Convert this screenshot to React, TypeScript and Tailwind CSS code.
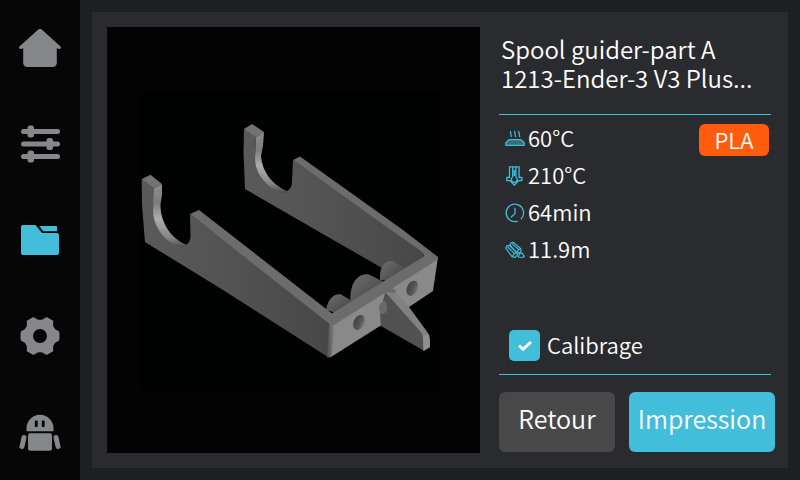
import React, { useState } from 'react';
import clsx from 'clsx';

type IconProps = { className?: string };

const HomeIcon = ({ className }: IconProps) => (
  <svg viewBox="0 0 42 38" className={className} fill="currentColor" aria-hidden="true">
    <path d="M19 .8a3 3 0 0 1 4 0L41.300 17.200c1.400 1.300.2 3.300-1.600 2.700L37.800 19v15a4.500 4.500 0 0 1-4.500 4H8.700a4.500 4.500 0 0 1-4.500-4V19l-1.900.9c-1.800.6-3-1.400-1.600-2.700Z" />
  </svg>
);

const SlidersIcon = ({ className }: IconProps) => (
  <svg viewBox="0 0 40 38" className={className} fill="currentColor" aria-hidden="true">
    <rect x="1" y="4" width="39" height="5" rx="2.500" />
    <rect x="1" y="16.500" width="39" height="5" rx="2.500" />
    <rect x="1" y="29" width="39" height="5" rx="2.500" />
    <rect x="7.500" y="0.500" width="6.500" height="12" rx="2.500" />
    <rect x="26.500" y="13" width="6.500" height="12" rx="2.500" />
    <rect x="7.500" y="25.500" width="6.500" height="12" rx="2.500" />
  </svg>
);

const FolderIcon = ({ className }: IconProps) => (
  <svg viewBox="0 0 38 30" className={className} fill="currentColor" aria-hidden="true">
    <path d="M2 0h12.500L21 8h15a2 2 0 0 1 2 2v18a2 2 0 0 1-2 2H2a2 2 0 0 1-2-2V2a2 2 0 0 1 2-2Z" />
    <path d="M18.300 1H35a1 1 0 0 1 1 1v4.200H22.200Z" />
  </svg>
);

const GearIcon = ({ className }: IconProps) => (
  <svg viewBox="0 0 40 38" className={className} fill="currentColor" aria-hidden="true">
    <path
      fillRule="evenodd"
      d="M12.500.5c.9-.5 1.900-.2 2.600.4 1.500 1.300 3 1.900 4.900 1.900s3.400-.6 4.900-1.900c.7-.6 1.700-.9 2.600-.4l4.900 2.800c.8.5 1.100 1.300.9 2.200-.4 2-.2 3.600.7 5.100.9 1.600 2.200 2.600 4 3.200.8.3 1.200.9 1.300 1.700.3 2.400.3 4.600 0 7-.1.800-.5 1.400-1.300 1.700-1.800.6-3.100 1.600-4 3.200-.9 1.500-1.100 3.100-.7 5.100.2.900-.1 1.700-.9 2.200l-4.900 2.800c-.9.5-1.900.2-2.600-.4-1.500-1.300-3-1.900-4.900-1.900s-3.400.6-4.900 1.900c-.7.6-1.700.9-2.600.4l-4.900-2.800c-.8-.5-1.100-1.300-.9-2.200.4-2 .2-3.600-.7-5.100-.9-1.600-2.200-2.600-4-3.200-.8-.3-1.200-.9-1.300-1.700a27 27 0 0 1 0-7c.1-.8.5-1.400 1.300-1.700 1.800-.6 3.100-1.600 4-3.200.9-1.500 1.100-3.100.7-5.100-.2-.9.1-1.700.9-2.200ZM20 12a7 7 0 1 0 0 14 7 7 0 0 0 0-14Z"
    />
  </svg>
);

const RobotIcon = ({ className }: IconProps) => (
  <svg viewBox="0 0 42 37" className={className} fill="currentColor" aria-hidden="true">
    <path
      fillRule="evenodd"
      d="M7.500 17.200v-3a13.500 13.500 0 0 1 27 0v3ZM16.800 6.500a1 1 0 0 0-1 1v4.600a1 1 0 0 0 1 1h.9a1 1 0 0 0 1-1V7.500a1 1 0 0 0-1-1Zm7 0a1 1 0 0 0-1 1v4.600a1 1 0 0 0 1 1h.9a1 1 0 0 0 1-1V7.500a1 1 0 0 0-1-1Z"
    />
    <rect x="9" y="19.200" width="24" height="17.500" rx="2" />
    <path d="M5 23.500 3 32.500M37 23.500l2 9" stroke="currentColor" strokeWidth="5" strokeLinecap="round" />
  </svg>
);

const BedIcon = ({ className }: IconProps) => (
  <svg viewBox="0 0 20 20" className={className} fill="none" stroke="currentColor" strokeWidth="1.200" aria-hidden="true">
    <path d="M4 10.700h12l3.200 3V16.400H.8v-2.700Z" fill="currentColor" fillOpacity=".45" strokeLinejoin="round" />
    <path d="M5.700 2c-1.400 1.200 1 2.300.2 3.600-.3.800.2 1.500.7 2.400M9.900 2c-1.400 1.200 1 2.300.2 3.600-.3.800.2 1.500.7 2.400M14.100 2c-1.400 1.200 1 2.300.2 3.600-.3.800.2 1.500.7 2.400" />
  </svg>
);

const NozzleIcon = ({ className }: IconProps) => (
  <svg viewBox="0 0 20 20" className={className} fill="none" stroke="currentColor" strokeWidth="1.300" aria-hidden="true">
    <path d="M4.500.8h9.600v10.700h2.700v3.200h-3.400L9.300 19.200l-4-4.500H1.800v-3.200h2.700Z" />
    <path d="M7.700 11V1M10.900 11V1M7.700 11a2.900 2.900 0 1 0 3.200 0M9.300 4v6" />
  </svg>
);

const ClockIcon = ({ className }: IconProps) => (
  <svg viewBox="0 0 20 20" className={className} fill="none" stroke="currentColor" strokeWidth="1.300" aria-hidden="true">
    <path d="M12.300 18.300a8.700 8.700 0 1 1 4-2.500" strokeLinecap="round" />
    <path d="M10 4.800v5.700L6 14.200" />
  </svg>
);

const FilamentIcon = ({ className }: IconProps) => (
  <svg viewBox="0 0 20 20" className={className} fill="none" stroke="currentColor" strokeWidth="1.200" strokeLinejoin="round" aria-hidden="true">
    <path d="M5 4.800 5.700 3 8 2.200l7.800 6.500.3 2.800-2.400 1.600-2.500-.8Z" />
    <path d="m6.800 3.600 7 6M13.800 9.600l-2.600 2.700M13.800 9.600l2-.9" />
    <path d="M.8 8.200 1.500 6.200l2.800-.8 7.600 7.200.4 2.900-2.500 1.900-2.800-.7Z" />
    <path d="m2.800 7 6.700 6.700M9.500 13.700l-2.500 3M9.500 13.700l2.400-1.100" />
    <path d="m13.300 17 1.200-3.300 2.600-.6 2.300 3.200-1.300 1Z" />
  </svg>
);

// Rendered thumbnail of the sliced model
const ModelPreview = () => (
  <svg viewBox="107 27 373 426" className="h-full w-full" role="img" aria-label="Spool guider-part A">
    <defs>
      <linearGradient id="armFace" x1="0" y1="0" x2="1" y2="0">
        <stop offset="0" stopColor="#5a5a5a" />
        <stop offset=".45" stopColor="#535353" />
        <stop offset="1" stopColor="#474747" />
      </linearGradient>
      <linearGradient id="hook" x1="0" y1="0" x2="0" y2="1">
        <stop offset="0" stopColor="#8c8c8c" />
        <stop offset=".3" stopColor="#7e7e7e" />
        <stop offset=".55" stopColor="#adadad" />
        <stop offset=".85" stopColor="#858585" />
        <stop offset="1" stopColor="#4c4c4c" />
      </linearGradient>
      <linearGradient id="cylinder" x1="0" y1="0" x2="1" y2="1">
        <stop offset="0" stopColor="#6c6c6c" />
        <stop offset=".35" stopColor="#5e5e5e" />
        <stop offset="1" stopColor="#3c3c3c" />
      </linearGradient>
      <linearGradient id="corner" x1="0" y1="0" x2="1" y2="0">
        <stop offset="0" stopColor="#4e4e4e" />
        <stop offset=".5" stopColor="#6b6b6b" />
        <stop offset="1" stopColor="#8b8b8b" />
      </linearGradient>
      <linearGradient id="hole" x1="0" y1="0" x2="1" y2="0">
        <stop offset="0" stopColor="#424242" />
        <stop offset=".6" stopColor="#555" />
        <stop offset="1" stopColor="#777" />
      </linearGradient>
    </defs>
    <rect x="107" y="27" width="373" height="426" fill="#030303" />
    <rect x="140" y="91" width="300" height="300" fill="#000101" />

    {/* far arm */}
    <path d="M244 129 256 136 255 157C257 172 267 185 277 190 286 194 292 190 292 182L293 160 391 229 422 250 424 256 423 261 404 271 382 268 316 230 245 189 243.500 152Z" fill="url(#armFace)" />
    <path d="M244 129 252 124 264 132 256 137Z" fill="#737373" />
    <path d="M256 137 264 132 263 146 261 156C262 171 272 185 288 191.500 283 195 273 191 267 184 258 175 255 167 255 157Z" fill="url(#hook)" />
    <path d="M293 160 300 156.500 403 230 438 257 425 266 423 258Q426 255 421 251L391 230Z" fill="#6c6c6c" />

    {/* cylinders behind the plate */}
    <path d="M380 280C379 265 386 260 393 261L407 270 400 282Z" fill="url(#cylinder)" />
    <path d="M350.500 303C349 283 358 273 369 274.500L386 283 372 300Z" fill="url(#cylinder)" />
    <path d="M326 310C328 298 335 293 341 294.500L354 302 340 314Z" fill="url(#cylinder)" />

    {/* near arm */}
    <path d="M141.700 179 154 187 154 202 153 210C155 225 165 239 175 244 184 249 191 244 190.500 235L190 214 331 323 328 357 223 290 145 242 142 205Z" fill="url(#armFace)" />
    <path d="M141.700 179 150.500 174.700 162 184 154 188Z" fill="#737373" />
    <path d="M154 188 162 184 162 195 160.500 204C160 222 171 239 187 245 182 250 173 246 167 240 157 230 153 220 153 210Z" fill="url(#hook)" />
    <path d="M190 214 199 210 332 313.500 336 325 331 325Z" fill="#6c6c6c" />

    {/* front plate */}
    <path d="M332 324 438 257 433 291 409 307 380 326 331 357Z" fill="#898989" />
    <path d="M331 314 423 257 438 257 437 260 334 325 329 324Z" fill="#6c6c6c" />
    <path d="M329 324 335 325 331.500 357 327 357.500Z" fill="url(#corner)" />
    <ellipse cx="359" cy="322.500" rx="5.300" ry="8" transform="rotate(25 359 322.500)" fill="url(#hole)" />
    <ellipse cx="412.300" cy="288.300" rx="5.300" ry="8" transform="rotate(25 412.300 288.300)" fill="url(#hole)" />

    {/* fin */}
    <path d="M385 293 388 294 424 334 423.500 350.500 381 326 380 313Z" fill="#515151" />
    <path d="M387 294 394 289.500 409 307 428 333Q430 336 430 340L430 347 423.500 351 423 339Q423 334 419 330Z" fill="#818181" />
    <path d="M423 336 429 334.500 430 347 423.500 351Z" fill="#8f8f8f" />
    <path d="M384 293 392 288 397 291 393 293.500 390 292Z" fill="#6a6a6a" />
    <path d="M379 307Q380 302 385 301 388 305 387 310 385 315 380 314Z" fill="#696969" />
  </svg>
);

const NAV_ITEMS = [
  { label: 'Accueil', Icon: HomeIcon, size: 'h-[38px] w-[42px]' },
  { label: 'Contrôle', Icon: SlidersIcon, size: 'h-[38px] w-[40px]' },
  { label: 'Fichiers', Icon: FolderIcon, size: 'h-[30px] w-[38px]', active: true },
  { label: 'Paramètres', Icon: GearIcon, size: 'h-[38px] w-[40px]' },
  { label: 'Assistance', Icon: RobotIcon, size: 'h-[37px] w-[42px]' },
];

const Sidebar = () => (
  <nav className="grid w-20 shrink-0 grid-rows-5 bg-[#060606]">
    {NAV_ITEMS.map(({ label, Icon, size, active }) => (
      <button
        key={label}
        type="button"
        aria-label={label}
        className={clsx('flex items-center justify-center', active ? 'text-[#42bdda]' : 'text-[#85878b]')}
      >
        <Icon className={size} />
      </button>
    ))}
  </nav>
);

const SPECS = [
  { value: '60°C', Icon: BedIcon },
  { value: '210°C', Icon: NozzleIcon },
  { value: '64min', Icon: ClockIcon },
  { value: '11.9m', Icon: FilamentIcon },
];

const Divider = () => <hr className="mr-1 h-px border-0 bg-[#42bdda]" />;

export default function App() {
  const [calibrate, setCalibrate] = useState(true);

  return (
    <div className="flex min-h-screen bg-[#1e1f21] font-['Noto_Sans_CJK_SC','Noto_Sans',sans-serif] font-[350] text-white">
      <Sidebar />
      <main className="flex flex-1 p-3">
        <div className="flex flex-1 bg-[#2a2b2f] py-[15px] pr-[13px] pl-[15px]">
          <div className="min-w-0 flex-1 bg-black">
            <ModelPreview />
          </div>

          <section className="ml-[19px] flex w-[276px] flex-col">
            <h1 className="pt-[7px] pb-[22px] pl-0.5 text-[24px] leading-[29px] font-[350]">
              Spool guider-part A<br />
              1213-Ender-3 V3 Plus...
            </h1>
            <Divider />

            <div className="flex items-start justify-between pr-1.5 pl-1.5">
              <ul className="flex flex-col pt-[5px]">
                {SPECS.map(({ value, Icon }) => (
                  <li key={value} className="flex h-[37px] items-center gap-[3px] text-[22px] leading-8">
                    <Icon className="size-5 text-[#42bdda]" />
                    <span className="pb-1">{value}</span>
                  </li>
                ))}
              </ul>
              <span className="mt-[9px] h-8 w-[70px] rounded-md bg-[#ff5c0d] text-center text-[22px] leading-[30px]">PLA</span>
            </div>

            <label className="mt-auto mb-[13px] ml-2.5 flex h-[31px] items-center gap-[7px] self-start text-[22px] leading-8">
              <span className="relative grid size-[31px] place-items-center">
                <input
                  type="checkbox"
                  checked={calibrate}
                  onChange={(e) => setCalibrate(e.target.checked)}
                  className="size-[31px] appearance-none rounded-[5px] bg-[#5a5b5f] checked:bg-[#42bdda]"
                />
                {calibrate && (
                  <svg viewBox="0 0 16 12" className="pointer-events-none absolute h-3 w-4" fill="none" stroke="white" strokeWidth="3" aria-hidden="true">
                    <path d="m2 5.500 4 3.800L14 2" />
                  </svg>
                )}
              </span>
              <span className="pb-1">Calibrage</span>
            </label>
            <Divider />

            <div className="mt-[17px] mb-px flex gap-3.5 text-[25px] leading-8">
              <button type="button" className="h-[60px] w-[116px] rounded-md bg-[#484848] pb-2">
                Retour
              </button>
              <button type="button" className="h-[60px] flex-1 rounded-md bg-[#42bdda] pb-2">
                Impression
              </button>
            </div>
          </section>
        </div>
      </main>
    </div>
  );
}
